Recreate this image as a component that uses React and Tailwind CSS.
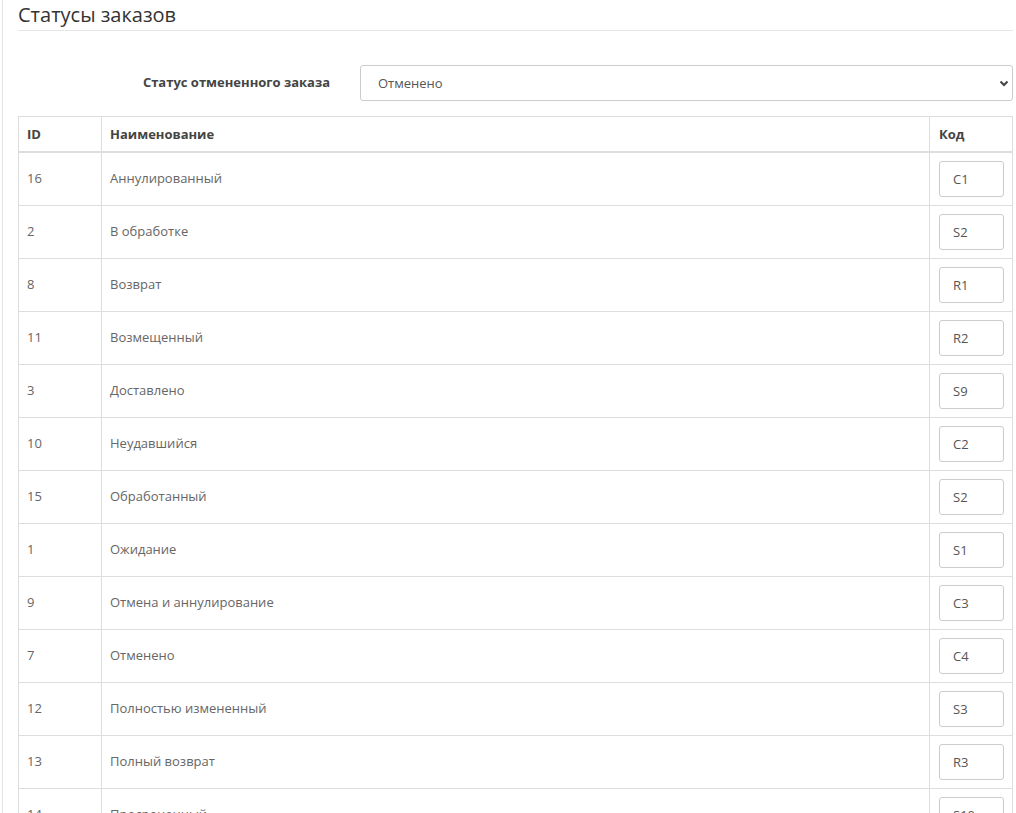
import React, { useState } from "react";

const statuses = [
  { id: 16, name: "Аннулированный", code: "C1" },
  { id: 2, name: "В обработке", code: "S2" },
  { id: 8, name: "Возврат", code: "R1" },
  { id: 11, name: "Возмещенный", code: "R2" },
  { id: 3, name: "Доставлено", code: "S9" },
  { id: 10, name: "Неудавшийся", code: "C2" },
  { id: 15, name: "Обработанный", code: "S2" },
  { id: 1, name: "Ожидание", code: "S1" },
  { id: 9, name: "Отмена и аннулирование", code: "C3" },
  { id: 7, name: "Отменено", code: "C4" },
  { id: 12, name: "Полностью измененный", code: "S3" },
  { id: 13, name: "Полный возврат", code: "R3" },
  { id: 14, name: "Просроченный", code: "S10" },
  { id: 5, name: "Отправлено", code: "S4" },
];

function CodeInput({ value }) {
  const [code, setCode] = useState(value);
  return (
    <input
      type="text"
      value={code}
      onChange={(e) => setCode(e.target.value)}
      className="w-[65px] h-[36px] border border-[#ccc] rounded-[3px] px-[13px] text-[13px] text-[#555] outline-none"
    />
  );
}

export default function App() {
  const [cancelStatus, setCancelStatus] = useState("7");

  return (
    <div className="min-h-screen bg-white font-['Open_Sans',sans-serif] text-[13px] text-[#666]">
      <div className="ml-[2px] border-l border-[#e3e3e3] pl-[15px] pr-[3px] pt-[4px] min-h-screen">
        <h2 className="text-[20px] leading-[22px] text-[#333] pb-[4px] border-b border-[#e6e6e6]">
          Статусы заказов
        </h2>

        <div className="flex items-center mt-[34px] mb-[15px]">
          <label className="w-[312px] text-right font-bold text-[#444]">
            Статус отмененного заказа
          </label>
          <div className="relative flex-1 ml-[30px]">
            <select
              value={cancelStatus}
              onChange={(e) => setCancelStatus(e.target.value)}
              className="w-full h-[36px] appearance-none border border-[#ccc] rounded-[3px] pl-[17px] pr-8 pt-px text-[13px] text-[#555] bg-white outline-none"
            >
              {statuses.map((s) => (
                <option key={s.id} value={String(s.id)}>
                  {s.name}
                </option>
              ))}
            </select>
            <svg
              className="absolute right-[4px] top-[15px] pointer-events-none"
              width="10"
              height="7"
              viewBox="0 0 10 7"
              fill="none"
            >
              <path d="M1.5 1.5 L5 5 L8.5 1.5" stroke="#444" strokeWidth="2" />
            </svg>
          </div>
        </div>

        <table className="w-full border-collapse border border-[#ddd]">
          <thead>
            <tr className="border-b-2 border-[#ddd] text-[#444] font-bold">
              <td className="w-[83px] border-r border-[#ddd] px-2 py-2 leading-[18px]">ID</td>
              <td className="border-r border-[#ddd] px-2 py-2 leading-[18px]">Наименование</td>
              <td className="w-[83px] pl-[9px] pr-[7px] py-2 leading-[18px]">Код</td>
            </tr>
          </thead>
          <tbody>
            {statuses.map((s) => (
              <tr key={s.id} className="border-b border-[#ddd]">
                <td className="border-r border-[#ddd] px-2 py-2">{s.id}</td>
                <td className="border-r border-[#ddd] px-2 py-2">{s.name}</td>
                <td className="pl-[9px] pr-[7px] py-2">
                  <CodeInput value={s.code} />
                </td>
              </tr>
            ))}
          </tbody>
        </table>
      </div>
    </div>
  );
}
